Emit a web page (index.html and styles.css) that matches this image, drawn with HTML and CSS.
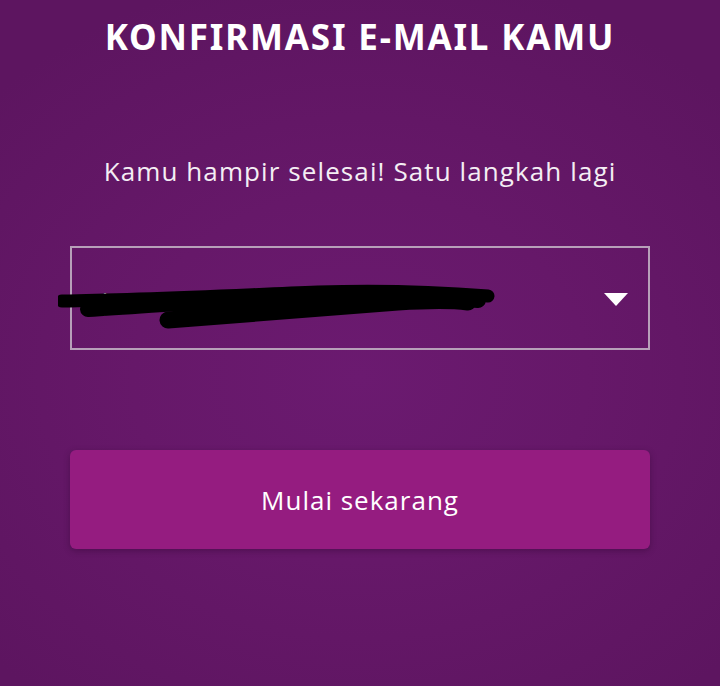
FILE: index.html
```html
<!DOCTYPE html>
<html lang="id">
<head>
<meta charset="utf-8">
<title>Konfirmasi E-mail</title>
<link rel="stylesheet" href="styles.css">
</head>
<body>
<main class="screen">
  <h1 class="title">KONFIRMASI E-MAIL KAMU</h1>
  <p class="lead">Kamu hampir selesai! Satu langkah lagi</p>
  <div class="select">
    <span class="email">j</span>
    <svg class="scribble" width="460" height="60" viewBox="0 0 460 60" aria-hidden="true">
      <path d="M4 27 C 80 26, 160 22, 260 18 C 320 16, 380 18, 430 22" stroke="#000" stroke-width="13" fill="none" stroke-linecap="round"/>
      <path d="M30 35 C 110 30, 200 22, 300 20 C 350 20, 390 24, 420 26" stroke="#000" stroke-width="16" fill="none" stroke-linecap="round"/>
      <path d="M110 46 C 180 40, 260 34, 340 28 C 370 26, 395 26, 410 28" stroke="#000" stroke-width="17" fill="none" stroke-linecap="round"/>
      <path d="M120 30 C 200 24, 280 20, 360 20" stroke="#000" stroke-width="16" fill="none" stroke-linecap="round"/>
    </svg>
    <span class="caret"></span>
  </div>
  <button class="cta" type="button">Mulai sekarang</button>
</main>
</body>
</html>
```

FILE: styles.css
```css
* { box-sizing: border-box; }
html, body { margin: 0; padding: 0; }
body {
  width: 720px;
  height: 686px;
  overflow: hidden;
  background: radial-gradient(ellipse 70% 60% at 50% 55%, #6b1a70 0%, #661869 45%, #5d1560 100%);
  font-family: "Open Sans", "Noto Sans", sans-serif;
  color: #fff;
}
.screen {
  display: flex;
  flex-direction: column;
  align-items: center;
  padding: 14px 70px 0;
}
.title {
  margin: 0;
  font-family: "Noto Sans", "Open Sans", sans-serif;
  font-weight: 700;
  font-size: 35px;
  line-height: 46px;
  letter-spacing: 1.8px;
  color: #fff;
}
.lead {
  margin: 94px 0 0;
  font-size: 26px;
  line-height: 34px;
  color: #f4eef4;
  letter-spacing: 1.1px;
}
.select {
  position: relative;
  margin-top: 58px;
  width: 580px;
  height: 104px;
  border: 2px solid #b7a0b9;
  display: flex;
  align-items: center;
  justify-content: flex-end;
  padding-right: 20px;
}
.email {
  position: absolute;
  left: 30px;
  top: 36px;
  font-size: 24px;
  color: #fff;
}
.scribble {
  position: absolute;
  left: -14px;
  top: 26px;
}
.caret {
  width: 0;
  height: 0;
  border-left: 12px solid transparent;
  border-right: 12px solid transparent;
  border-top: 13px solid #fff;
  margin-top: 2px;
}
.cta {
  margin-top: 100px;
  width: 580px;
  height: 99px;
  border: none;
  border-radius: 6px;
  background: #951c80;
  box-shadow: 0 2px 6px rgba(40, 0, 40, 0.35);
  color: #fff;
  font-family: "Open Sans", "Noto Sans", sans-serif;
  font-size: 26px;
  letter-spacing: 1px;
  padding: 0;
}
```
